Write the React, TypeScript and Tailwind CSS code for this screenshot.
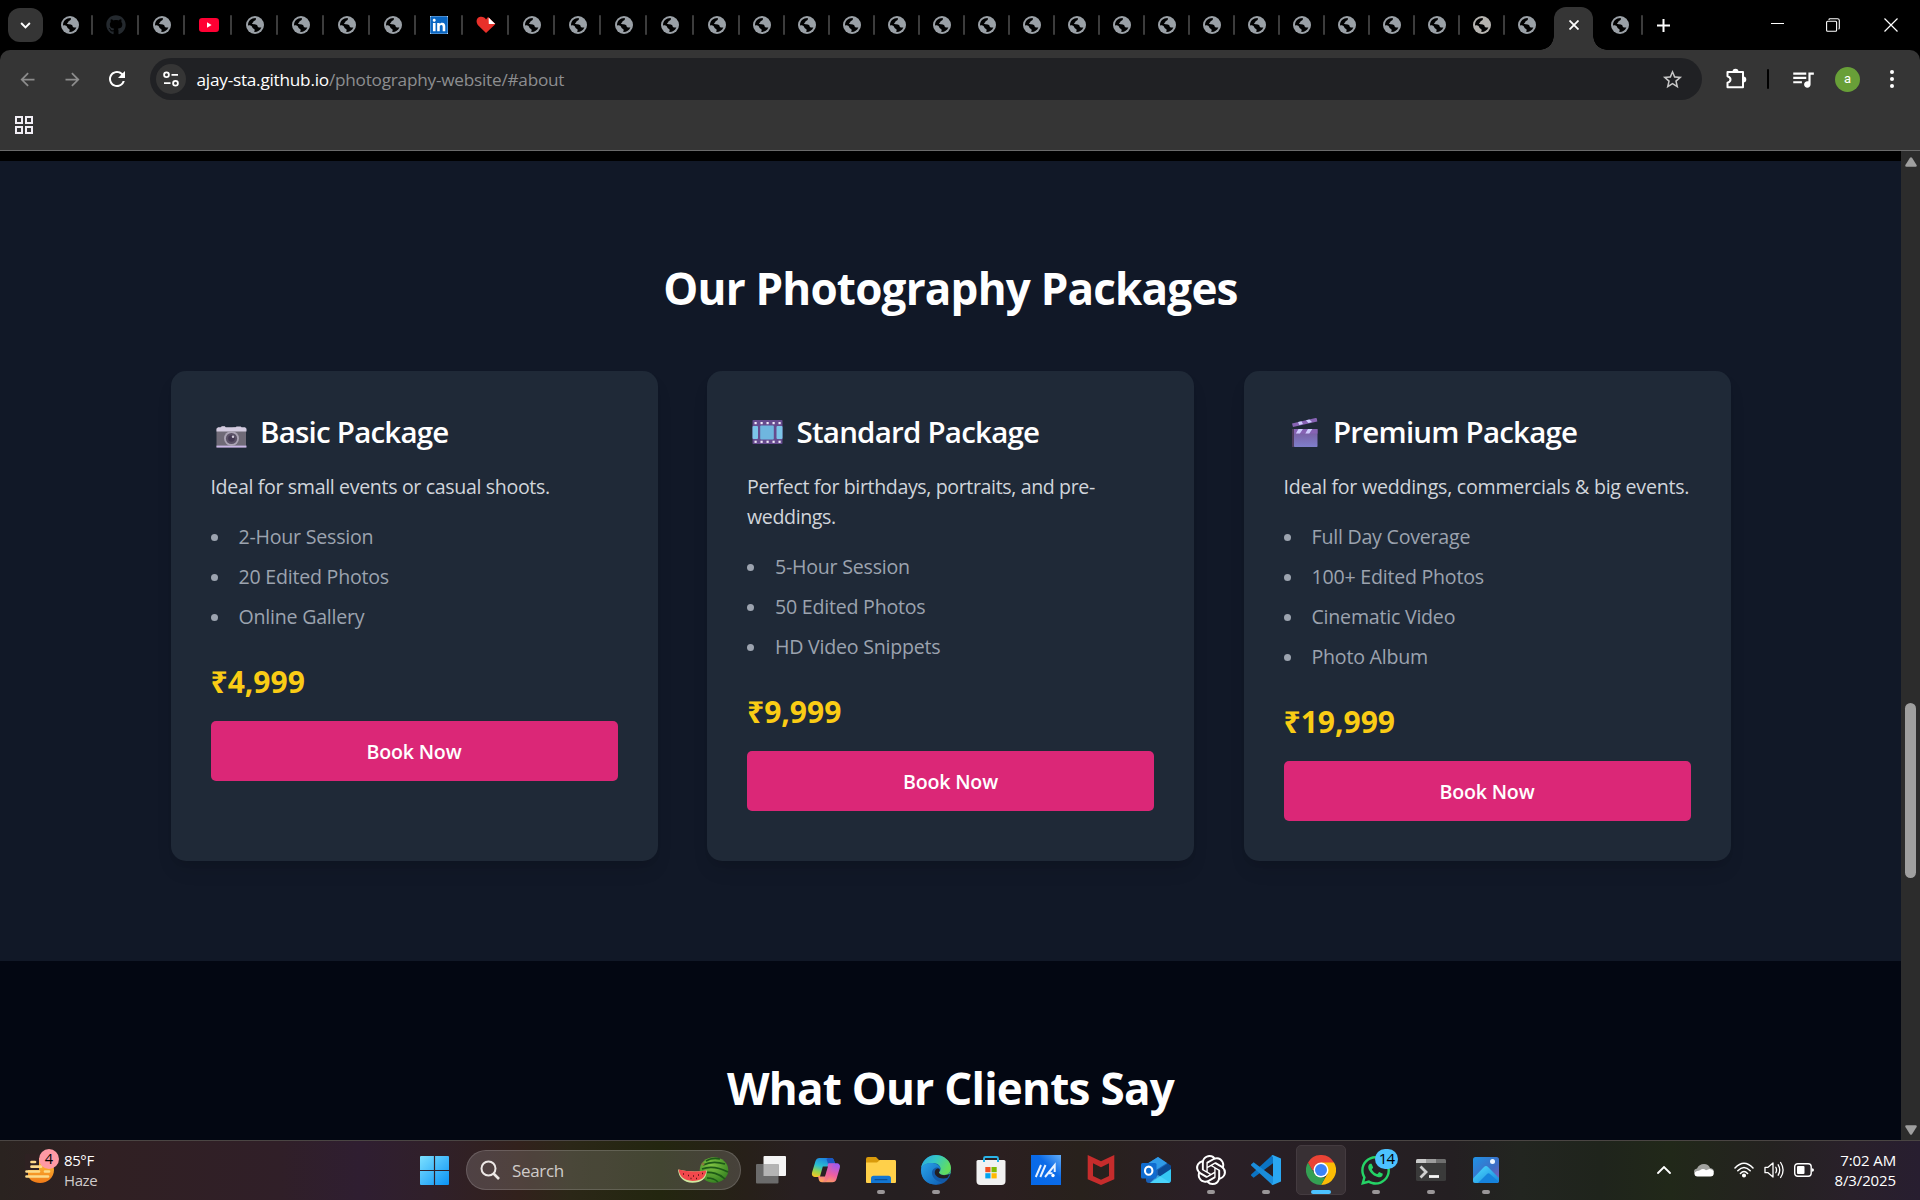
import type { ReactNode } from "react";
import { FaGithub, FaLinkedin, FaWhatsapp } from "react-icons/fa";
import { SiOpenai } from "react-icons/si";
import { MdQueueMusic, MdStarBorder, MdRefresh, MdArrowBack, MdArrowForward } from "react-icons/md";

/* ---------- Favicons ---------- */

function Globe({ light = false }: { light?: boolean }) {
  return (
    <svg viewBox="0 0 18 18" className="size-[18px] shrink-0">
      <circle cx="9" cy="9" r="9" fill={light ? "#b5b3af" : "#9aa0a6"} />
      <path
        fill="#000"
        d="M2 9.2C2 5.2 5 2.2 9.6 2.1 10.4 3.2 9.8 4.2 8.4 4.8 6.9 5.3 7.6 6.6 6.4 7.1 5.6 7.6 6.2 8.3 8 8.2 10.8 8.2 11.8 9.4 11.7 10.6 11.8 12 13.4 11.2 15.4 11.6 14 14.8 11.4 16.2 8.2 16 8.8 14.8 9 13.2 7.6 12.8 5.8 12.2 6.6 10.4 5.2 9.8 4.2 9.3 3 9.6 2 9.2Z"
      />
    </svg>
  );
}

function YouTube() {
  return (
    <svg viewBox="0 0 20 14" className="h-[14px] w-5 shrink-0">
      <rect width="20" height="14" rx="3.2" fill="#ff0033" />
      <path d="M8 4.2L12.6 7 8 9.8z" fill="#fff" />
    </svg>
  );
}

function LinkedIn() {
  return (
    <span className="flex size-[18px] shrink-0 items-center justify-center bg-white">
      <FaLinkedin className="size-[20px] shrink-0 text-[#0a66c2]" />
    </span>
  );
}

function Heart() {
  return (
    <svg viewBox="0 0 20 18" className="h-[18px] w-5 shrink-0">
      <path d="M10 17L1.800 9C-.6 5.600.6 1.400 4.400.8 6.800.4 9 1.600 10 3.400L12 1l7.400 7-1.400 1.400z" fill="#e8302a" />
      <path d="M12.600 1.400l6.600 6.500-6.400.2z" fill="#fff" />
    </svg>
  );
}

const icons: Record<number, ReactNode> = {
  1: <FaGithub className="size-5 shrink-0 text-[#24292e]" />,
  3: <YouTube />,
  8: <LinkedIn />,
  9: <Heart />,
  31: <Globe light />,
};
const wideTabs = Array.from({ length: 15 }, (_, i) => i);
const narrowTabs = Array.from({ length: 18 }, (_, i) => i + 15);

function Separator() {
  return <span className="h-5 w-[2px] shrink-0 rounded-full bg-[#3c3c3c]" />;
}

/* ---------- Browser chrome ---------- */

function TabStrip() {
  return (
    <div className="flex h-[50px] items-center bg-black">
      <button className="ml-2 flex h-[34px] w-[35px] shrink-0 items-center justify-center rounded-xl bg-[#353535]">
        <svg viewBox="0 0 12 8" className="h-[7px] w-[11px]" fill="none" stroke="#fff" strokeWidth="2.2">
          <path d="M1 1.200l5 5 5-5" />
        </svg>
      </button>
      <div className="ml-[3.900px] flex shrink-0 items-center">
        {wideTabs.map((i) => (
          <div key={i} className="flex w-[46.200px] items-center pl-[2px]">
            <span className="flex flex-1 justify-center">{icons[i] ?? <Globe />}</span>
            <Separator />
          </div>
        ))}
        {narrowTabs.map((i) => (
          <div key={i} className="flex w-[45px] items-center pl-[1px]">
            <span className="flex flex-1 justify-center">{icons[i] ?? <Globe />}</span>
            {i < 32 ? <Separator /> : <span className="w-[2px]" />}
          </div>
        ))}
      </div>
      <div className="relative ml-[4.500px] flex h-[43px] w-[39px] shrink-0 items-center justify-center self-end rounded-t-xl bg-[#353535]">
        <span className="absolute bottom-0 -left-[14px] size-[14px] bg-[radial-gradient(circle_at_0_0,transparent_13.500px,#353535_14px)]" />
        <span className="absolute -right-[14px] bottom-0 size-[14px] bg-[radial-gradient(circle_at_100%_0,transparent_13.500px,#353535_14px)]" />
        <svg viewBox="0 0 10 10" className="mb-[7px] size-[10px]" stroke="#fff" strokeWidth="1.800">
          <path d="M.5.5l9 9M9.500.5l-9 9" />
        </svg>
      </div>
      <div className="ml-[17.500px] flex shrink-0 items-center gap-[12px]">
        <Globe />
        <Separator />
      </div>
      <svg viewBox="0 0 13 13" className="ml-[14.500px] size-[13px] shrink-0" stroke="#fff" strokeWidth="2">
        <path d="M6.500 0v13M0 6.500h13" />
      </svg>
      <div className="ml-auto flex items-center pr-[22px]">
        <span className="mb-[3px] h-px w-[13px] bg-white" />
        <svg viewBox="0 0 14 14" className="mr-[44px] ml-[42px] size-[14px]" fill="none" stroke="#fff" strokeWidth="1.100">
          <rect x=".6" y="3.200" width="10" height="10" rx="1" />
          <path d="M3 1.900V1.600Q3 .7 4 .7H11.500Q13.300.7 13.300 2.500V10Q13.300 11 12.500 11" />
        </svg>
        <svg viewBox="0 0 14 14" className="size-[14px]" stroke="#fff" strokeWidth="1.200">
          <path d="M.5.5l13 13M13.500.5l-13 13" />
        </svg>
      </div>
    </div>
  );
}

function Extensions() {
  return (
    <svg viewBox="0 0 22 22" className="ml-[23px] size-[22px]">
      <path
        d="M2.500 4h15.500v15.300H2.500v-4.500q3-1 3-3.300T2.500 8.200z"
        fill="none"
        stroke="#fff"
        strokeWidth="2"
        strokeLinejoin="round"
      />
      <path d="M7.500 3.800a3 3 0 0 1 6 0zM18.300 8.600a3 3 0 0 1 0 6z" fill="#fff" />
    </svg>
  );
}

function Toolbar() {
  return (
    <div className="bg-black">
      <div className="h-[101px] rounded-t-[10px] border-b border-[#6a6a6a] bg-[#353535]">
        <div className="flex h-[58px] items-center">
          <MdArrowBack className="ml-[17px] size-[21px] text-[#8c8c8c]" />
          <MdArrowForward className="ml-[24px] size-[21px] text-[#8c8c8c]" />
          <MdRefresh className="ml-[22px] size-[24px] text-white" />
          <div className="ml-[21px] flex h-[42px] w-[1552px] items-center rounded-full bg-[#202124]">
            <span className="ml-1.5 flex size-[30px] items-center justify-center rounded-full bg-[#353535]">
              <svg viewBox="0 0 16 16" className="size-4" fill="none" stroke="#fff" strokeWidth="1.800">
                <circle cx="3.500" cy="3.800" r="2.400" />
                <path d="M8.500 3.800H15M1 12.200H7.500" />
                <circle cx="12.500" cy="12.200" r="2.400" />
              </svg>
            </span>
            <span className="ml-[10.500px] pt-[2px] text-[17.200px] leading-none tracking-[-0.230px] text-white">
              ajay-sta.github.io<span className="text-[#8d8e90]">/photography-website/#about</span>
            </span>
            <MdStarBorder className="mr-[18px] ml-auto size-[23px] text-[#c7c7c7]" />
          </div>
          <Extensions />
          <span className="ml-[20px] h-5 w-[2px] rounded-full bg-black" />
          <MdQueueMusic className="ml-[21px] size-[26px] text-white" />
          <span className="ml-[19px] flex size-[25px] items-center justify-center rounded-full bg-[#689f38] pb-px font-['Roboto'] text-[13px] leading-none text-white">
            a
          </span>
          <span className="ml-[30px] flex flex-col gap-[3px]">
            <span className="size-1 rounded-full bg-white" />
            <span className="size-1 rounded-full bg-white" />
            <span className="size-1 rounded-full bg-white" />
          </span>
        </div>
        <div className="ml-[15px] grid w-[18px] grid-cols-2 gap-[2px] pt-[8px]">
          {[0, 1, 2, 3].map((i) => (
            <span key={i} className="size-2 border-2 border-[#f1eef5]" />
          ))}
        </div>
      </div>
    </div>
  );
}

/* ---------- Package cards ---------- */

function CameraIcon() {
  return (
    <svg viewBox="0 0 48 40" className="h-10 w-12 shrink-0">
      <path d="M6 17h3l1-1.500h4l1 1.500h6l2-1h4l2 1.200h2v1h4v18.300H5.500V18z" fill="#6f6a77" />
      <path d="M5.500 17.800L7 16.200H10l.8-1h3l.8 1h10l1-.8h4l1 .8h3.500l1.400 1.600v2.700h-30z" fill="#d3cbe0" />
      <rect x="5.500" y="34.600" width="30" height="1.900" fill="#c9b6e6" />
      <circle cx="20.500" cy="27.500" r="7.500" fill="#aaa3b4" />
      <circle cx="20.500" cy="27.500" r="5.600" fill="#5b5267" />
      <circle cx="20.500" cy="27.500" r="3.300" fill="#453a54" />
      <circle cx="22" cy="25.800" r="1.200" fill="#cfc9d8" />
    </svg>
  );
}

function FilmIcon() {
  return (
    <svg viewBox="0 0 48 40" className="h-10 w-12 shrink-0">
      <rect x="5.500" y="9" width="30" height="24" rx=".8" fill="#664b8e" />
      <rect x="5.500" y="15" width="5.500" height="13" rx="1" fill="#7cc4e8" />
      <rect x="13.200" y="14.600" width="13.600" height="13.800" rx="1" fill="#6fb6df" />
      <rect x="29.500" y="15" width="6" height="13" rx="1" fill="#7cc4e8" />
      {[7.5, 13.5, 19.5, 25.5, 31.5].map((x) => (
        <g key={x} fill="#efe9f8">
          <rect x={x} y="11" width="2.200" height="2.200" />
          <rect x={x} y="29.700" width="2.200" height="2.200" />
        </g>
      ))}
    </svg>
  );
}

function ClapperIcon() {
  return (
    <svg viewBox="0 0 48 40" className="h-10 w-12 shrink-0">
      <defs>
        <linearGradient id="clapper" x1="0" y1="0" x2="0" y2="1">
          <stop offset="0" stopColor="#78599a" />
          <stop offset="1" stopColor="#7f7fcb" />
        </linearGradient>
      </defs>
      <path d="M8 18h2.500v18H8z" fill="#4d3c5c" />
      <rect x="10" y="18" width="23.500" height="18" rx=".8" fill="url(#clapper)" />
      <path d="M8 12.400L31.500 7q1.200-.2 1.400.8l.4 2.600L9 16z" fill="#8763b4" />
      <path d="M14 11l3.500-.8 1.400 2.800-3.600 1zM22 9.200l3.400-.8 2.600 2.700-3.600.9z" fill="#cfcdff" />
      <rect x="10" y="18" width="23.500" height="4.600" fill="#8763b4" />
      <path d="M14.500 18h4.400l-3 4.600h-4zM24 18h4.300l-3 4.600h-4z" fill="#cfcdff" />
    </svg>
  );
}

interface Package {
  icon: ReactNode;
  title: string;
  text: string;
  textClass: string;
  features: string[];
  price: string;
}

const packages: Package[] = [
  {
    icon: <CameraIcon />,
    title: "Basic Package",
    text: "Ideal for small events or casual shoots.",
    textClass: "tracking-[-0.350px]",
    features: ["2-Hour Session", "20 Edited Photos", "Online Gallery"],
    price: "₹4,999",
  },
  {
    icon: <FilmIcon />,
    title: "Standard Package",
    text: "Perfect for birthdays, portraits, and pre-weddings.",
    textClass: "tracking-[-0.380px]",
    features: ["5-Hour Session", "50 Edited Photos", "HD Video Snippets"],
    price: "₹9,999",
  },
  {
    icon: <ClapperIcon />,
    title: "Premium Package",
    text: "Ideal for weddings, commercials & big events.",
    textClass: "tracking-[-0.240px]",
    features: ["Full Day Coverage", "100+ Edited Photos", "Cinematic Video", "Photo Album"],
    price: "₹19,999",
  },
];

function PackageCard({ icon, title, text, textClass, features, price }: Package) {
  return (
    <div className="rounded-[15px] bg-[#1f2937] p-10 shadow-[0_12px_19px_-4px_rgba(0,0,0,0.1),0_5px_8px_-5px_rgba(0,0,0,0.1)]">
      <h3 className="mb-5 flex h-10 items-center text-[29.500px] leading-10 font-semibold tracking-[-0.780px] text-white">
        {icon}
        <span className="pt-[2px] pl-[1.500px]">{title}</span>
      </h3>
      <p className={`mb-[19px] pt-px text-[19.600px] leading-[30px] text-[#d1d5db] ${textClass}`}>{text}</p>
      <ul className="mb-[29px] space-y-[10px] pt-px text-[19.600px] leading-[30px] tracking-[-0.230px] text-[#9ca3af]">
        {features.map((f) => (
          <li key={f} className="flex items-center">
            <span className="mr-[21px] size-[7px] rounded-full bg-[#9ca3af]" />
            {f}
          </li>
        ))}
      </ul>
      <p className="mb-[19px] pt-[1px] text-[30px] leading-10 font-bold text-[#facc15]">{price}</p>
      <button className="h-[60px] w-full rounded-[5px] bg-[#db2777] pt-[2px] text-[19.600px] font-semibold tracking-[-0.200px] text-white">
        Book Now
      </button>
    </div>
  );
}

function Page() {
  return (
    <div className="h-[989px] flex-1 overflow-hidden">
      <div className="h-[10px] bg-black" />
      <section className="h-[800px] bg-[#111827] pt-[102px]">
        <h2 className="mb-[58px] text-center text-[44px] leading-[50px] font-bold tracking-[-0.800px] text-white">
          Our Photography Packages
        </h2>
        <div className="mx-auto grid h-[490px] w-[1560px] grid-cols-3 gap-[49.500px]">
          {packages.map((p) => (
            <PackageCard key={p.title} {...p} />
          ))}
        </div>
      </section>
      <section className="h-[179px] bg-[#030712] pt-[102px]">
        <h2 className="text-center text-[44px] leading-[50px] font-bold tracking-[-0.740px] text-white">
          What Our Clients Say
        </h2>
      </section>
    </div>
  );
}

function Scrollbar() {
  return (
    <div className="flex h-[989px] w-[19px] flex-col items-center bg-[#2c2c2c]">
      <svg viewBox="0 0 12 10" className="mt-[6px] h-[10px] w-3" fill="#9f9f9f">
        <path d="M5 .8q1-1.200 2 0l4.600 7.200q.6 1.500-1 1.700H1.400q-1.600-.2-1-1.700z" />
      </svg>
      <div className="mt-[536px] h-[175px] w-[11px] rounded-full bg-[#9f9f9f]" />
      <svg viewBox="0 0 12 10" className="mt-auto mb-[5px] h-[10px] w-3" fill="#9f9f9f">
        <path d="M5 9.200q1 1.200 2 0l4.600-7.200q.6-1.500-1-1.700H1.400q-1.600.2-1 1.700z" />
      </svg>
    </div>
  );
}

/* ---------- Taskbar ---------- */

function Weather() {
  return (
    <div className="relative ml-[25px] size-[32px]">
      <svg viewBox="0 0 32 32" className="size-8">
        <defs>
          <linearGradient id="sun" x1="0" y1="0" x2="0" y2="1">
            <stop offset="0" stopColor="#ffc83d" />
            <stop offset="1" stopColor="#f07a18" />
          </linearGradient>
        </defs>
        <path d="M3 15C3 8 8 4 15 4s14 5 14 12-6 13-14 13C8 29 4 25 3 22z" fill="url(#sun)" />
        <path d="M0 0h16v4H0zM0 4h14v12H0zM0 12h3v9H0z" fill="#2e2122" />
        <path d="M6.500 8H10M6.500 12.700H16M1.500 17.500H14M20 17.500h4M1.500 22.500H23" stroke="#fcdb8a" strokeWidth="2.700" strokeLinecap="round" />
      </svg>
      <span className="absolute -top-[5px] left-[14px] flex size-5 items-center justify-center rounded-full bg-[#ff99a4] text-[14.500px] leading-none text-black">
        4
      </span>
    </div>
  );
}

function Watermelon() {
  return (
    <svg viewBox="0 0 52 28" className="h-7 w-[52px]">
      <defs>
        <radialGradient id="melon" cx=".4" cy=".3" r=".8">
          <stop offset="0" stopColor="#7fc242" />
          <stop offset="1" stopColor="#2f7d1e" />
        </radialGradient>
      </defs>
      <ellipse cx="37" cy="14" rx="14.300" ry="12.800" fill="url(#melon)" />
      <path
        d="M26 9c6-3 15-3 22-1M25 13c8-3 18-1 26 3M26 17c8-2 17 1 22 6M29 5c5-3 10-3 14-2M30 22c4 0 8 1 11 4"
        stroke="#1d5a17"
        strokeWidth="1.700"
        fill="none"
      />
      <circle cx="26" cy="8" r="1.500" fill="#8b7a3a" />
      <path d="M1 13.500Q15 17 30 14.500 29 26.800 15.500 26.800 2 26 1 13.500z" fill="#cfe8a0" />
      <path d="M1.600 13.600Q15 17 29.400 14.500 28 25 15.500 25 3 24.500 1.600 13.600z" fill="#f2484c" />
      <path d="M6 18h1M11 19.500h1M16 20h1M21 19h1M25 17.500h1M13.500 22.500h1M19 22.500h1" stroke="#5a1218" strokeWidth="1.400" />
    </svg>
  );
}

function TaskView() {
  return (
    <svg viewBox="0 0 30 30" className="size-[30px]">
      <rect x="7.500" y="1" width="22.500" height="20" rx="1" fill="#f4f4f4" />
      <rect x="0" y="9" width="22.500" height="19.500" rx="1" fill="#6b6b6b" />
      <rect x="7.500" y="9" width="15" height="12" fill="#b4b4b4" />
    </svg>
  );
}

function Copilot() {
  return (
    <svg viewBox="0 0 30 30" className="size-[30px]">
      <defs>
        <linearGradient id="cpa" x1=".6" y1="0" x2=".2" y2="1">
          <stop offset="0" stopColor="#1c7fe0" />
          <stop offset=".45" stopColor="#2bbfd0" />
          <stop offset=".75" stopColor="#9bd44a" />
          <stop offset="1" stopColor="#f5c527" />
        </linearGradient>
        <linearGradient id="cpb" x1=".7" y1="0" x2=".3" y2="1">
          <stop offset="0" stopColor="#a05af0" />
          <stop offset=".55" stopColor="#ef5fa0" />
          <stop offset="1" stopColor="#ffa45c" />
        </linearGradient>
      </defs>
      <path d="M14 3h6c2 0 2.600 1 3.200 3l1 3.500h-3c-2 0-3 .8-3.600 2.500L14 22H5C1.500 22 .3 20 1.200 17L4.500 6C5.200 4 6.500 3 8.500 3z" fill="url(#cpa)" />
      <path d="M17 3h3c2 0 2.600 1 3.200 3l1 3.500h-7L15.500 4z" fill="#1a56c4" />
      <path d="M16 27.300h-5c-2 0-2.800-1-3.300-3L7 21h4c2 0 2.700-1 3.200-2.500L17.300 8.300H25c3.500 0 4.600 2 3.700 5L25.500 24c-.7 2.200-2 3.300-4 3.300z" fill="url(#cpb)" />
      <path d="M11.800 11.500H17l-3 10H9z" fill="#292023" />
      <path d="M17.800 8.300H25q-3 .4-4 3.200l-3.800 12q-1 3.500-4 3.800H11q2-.8 3-4z" fill="#e95f9d" opacity=".35" />
    </svg>
  );
}

function Explorer() {
  return (
    <svg viewBox="0 0 30 30" className="size-[30px]">
      <path d="M0 4q0-2 2-2h8l3 3h7v10H0z" fill="#d99a0b" />
      <path d="M0 7.500h11L14 5h15q1 0 1 1.500V27q0 1-1 1H1q-1 0-1-1z" fill="#ffd04a" />
      <path d="M5 28v-4.500Q5 20.800 7.700 20.800H22.300Q25 20.800 25 23.500V28z" fill="#1276d3" />
      <rect x="8.500" y="24" width="13" height="1.300" rx=".6" fill="#0a4f96" />
    </svg>
  );
}

function Edge() {
  return (
    <svg viewBox="0 0 30 30" className="size-[30px]">
      <defs>
        <linearGradient id="edA" x1="0" y1="0" x2="1" y2=".4">
          <stop offset="0" stopColor="#2aa6e6" />
          <stop offset=".5" stopColor="#35c7c4" />
          <stop offset="1" stopColor="#62dd5e" />
        </linearGradient>
        <linearGradient id="edB" x1="0" y1="0" x2="1" y2="1">
          <stop offset="0" stopColor="#2aa3e8" />
          <stop offset="1" stopColor="#0f62b8" />
        </linearGradient>
      </defs>
      <circle cx="15" cy="15" r="15" fill="#135aa8" />
      <path d="M0 14C.5 6 7 0 15 0s15 6 15 13c0 4-3 7-7 7-3 0-5-1-5-2.200 0-.8 1.600-1.500 1.600-4 0-3-3-5.800-7.600-5.800C6 8 1 10 0 14z" fill="url(#edA)" />
      <path d="M0 15C.4 10 5 8 10 8c5 0 9 2.500 9.500 6-2-2-5-2.200-7 0-4 4 0 12 8 13.500C12 32 0 28 0 15z" fill="url(#edB)" />
      <path d="M19 15c-1 1.500-1.400 2.500-.6 3.300C20 20.500 25 21 28.800 18.500c-.8 2-1.600 3.300-2.500 4.500-4 1-9.500.6-11.800-3-1.400-2.400-.7-5.500 2-6.500 1-.3 2 .5 2.500 1.500z" fill="#241f22" />
      <path d="M18 17.500c1.400 2.600 7 3.600 11.500.8.300-1.200.5-2.300.5-4-.4 3.800-3.500 5.700-7 5.700-2.500 0-4.600-1-5-2.500z" fill="#55d66a" />
    </svg>
  );
}

function Store() {
  return (
    <svg viewBox="0 0 30 30" className="size-[30px]">
      <path d="M8 7V3.500Q8 2 9.500 2h11Q22 2 22 3.500V7" fill="none" stroke="#2ab4e8" strokeWidth="1.900" />
      <path d="M.5 6.500Q.5 5 2 5h26q1.500 0 1.500 1.500V26q0 4-4 4h-21q-4 0-4-4z" fill="#f1f1f1" />
      <path d="M7 5h2v2H7zM21 5h2v2h-2z" fill="#2ab4e8" />
      <rect x="9.300" y="12" width="5.200" height="5.200" fill="#f25022" />
      <rect x="15.500" y="12" width="5.200" height="5.200" fill="#7fba00" />
      <rect x="9.300" y="18.200" width="5.200" height="5.200" fill="#00a4ef" />
      <rect x="15.500" y="18.200" width="5.200" height="5.200" fill="#ffb900" />
    </svg>
  );
}

function MyAsus() {
  return (
    <svg viewBox="0 0 30 30" className="size-[30px]">
      <defs>
        <linearGradient id="asus" x1="0" y1="1" x2="1" y2="0">
          <stop offset="0" stopColor="#0568e8" />
          <stop offset=".6" stopColor="#0b6be8" />
          <stop offset="1" stopColor="#63adf7" />
        </linearGradient>
      </defs>
      <rect width="30" height="30" fill="url(#asus)" />
      <path d="M4.800 22L10 10M9.300 22L14.500 10M14 22L23.700 10V17M17 18.300h4.500" fill="none" stroke="#e8f2ff" strokeWidth="2" />
      <circle cx="22" cy="20.500" r="1.700" fill="#fff" />
    </svg>
  );
}

function McAfee() {
  return (
    <svg viewBox="0 0 30 30" className="size-[30px]">
      <path d="M1.700 0L15 6.300 28.300 0V24.300L15 30 1.700 24.300zM7 8.300V21l8 3.700L23 21V8.300l-8 4z" fill="#c62c2c" fillRule="evenodd" />
    </svg>
  );
}

function Outlook() {
  return (
    <svg viewBox="0 0 30 30" className="size-[30px]">
      <path d="M5 9.500L17 2l13 9v14q0 3-3 3H8q-3 0-3-3z" fill="#1a5fb4" />
      <path d="M5 9.500L17 2l9 6-14 9z" fill="#2f9be8" />
      <path d="M17 15L27 8.500l3 2.500v5L17 22z" fill="#0b4a94" />
      <path d="M9 28L30 14v11q0 3-3 3z" fill="#35c8f4" />
      <path d="M9 28l8-8 12 7.500q-1 .5-2 .5z" fill="#5bdcff" opacity=".55" />
      <rect x="0" y="8" width="15.500" height="15.500" rx="1.500" fill="#0f6cd0" />
      <ellipse cx="7.700" cy="15.700" rx="3.700" ry="4.100" fill="none" stroke="#fff" strokeWidth="2.100" />
    </svg>
  );
}

function VSCode() {
  return (
    <svg viewBox="0 0 30 30" className="size-[30px]">
      <path d="M22 8.300L2.600 22.700.3 20.700Q-.3 20 .4 19.200L20.600.7 22 .2z" fill="#0b74c4" />
      <path d="M22 21.700L2.600 7.300.3 9.300Q-.3 10 .4 10.800L20.600 29.300l1.400.5z" fill="#1a8ddb" />
      <path d="M21.800 0L30 3.600V26.400L21.800 30 20.500 29.200 22 28V2L20.500.8z" fill="#2aa7f2" />
    </svg>
  );
}

function Chrome() {
  return (
    <svg viewBox="0 0 30 30" className="size-[30px]">
      <path d="M15 15L2 7.500A15 15 0 0 1 28 7.500z" fill="#ea4335" />
      <path d="M15 7.500H28A15 15 0 0 1 15 30L21.500 18.750z" fill="#fbbc05" />
      <path d="M2 7.500L8.500 18.750 15 22.500H19.300L15 30A15 15 0 0 1 2 7.500z" fill="#34a053" />
      <path d="M2 7.500H15V15H6.300z" fill="#ea4335" />
      <circle cx="15" cy="15" r="7.500" fill="#fff" />
      <circle cx="15" cy="15" r="6" fill="#3b82f6" />
    </svg>
  );
}

function WhatsApp() {
  return (
    <span className="relative">
      <FaWhatsapp className="size-[33px] text-[#25d366]" />
      <span className="absolute -top-[5px] left-[16px] flex h-5 w-[23px] items-center justify-center rounded-full bg-[#4cc2ff] text-[15px] leading-none tracking-[-0.800px] text-black">
        14
      </span>
    </span>
  );
}

function Terminal() {
  return (
    <svg viewBox="0 0 30 30" className="size-[30px]">
      <rect x="0" y="4" width="30" height="22" rx="1.500" fill="#3a3a3a" />
      <path d="M0 5.500Q0 4 1.500 4H10v4H0z" fill="#c9c9c9" />
      <path d="M10 4h10v4H10z" fill="#9c9c9c" />
      <path d="M20 4h8.500Q30 4 30 5.500V8H20z" fill="#6f6f6f" />
      <path d="M4.500 11.500L10 17l-5.500 5.500" fill="none" stroke="#cfcfcf" strokeWidth="2.800" />
      <path d="M13 21.500H23" stroke="#f5f5f5" strokeWidth="2.800" />
    </svg>
  );
}

function Photos() {
  return (
    <svg viewBox="0 0 30 30" className="size-[30px]">
      <defs>
        <linearGradient id="phA" x1="0" y1="0" x2="1" y2="1">
          <stop offset="0" stopColor="#1f93e6" />
          <stop offset=".6" stopColor="#3f6dc4" />
          <stop offset="1" stopColor="#8a5bb8" />
        </linearGradient>
        <linearGradient id="phB" x1="0" y1="0" x2="1" y2="1">
          <stop offset="0" stopColor="#4fdcff" />
          <stop offset="1" stopColor="#1787dd" />
        </linearGradient>
      </defs>
      <rect x="2" y="2" width="26" height="26" rx="2.500" fill="url(#phA)" />
      <path d="M2 23.500L13 12q2-2 4 0l11 11v2.500q0 2.500-2.500 2.500h-21Q2 28 2 25.500z" fill="url(#phB)" />
      <path d="M7 28l9-9q1.500-1.300 3 0l8.500 7.500q-.6 1.500-2 1.500z" fill="#1683dc" />
      <circle cx="21.500" cy="6.500" r="2.500" fill="#eef6ff" />
    </svg>
  );
}

interface TaskbarItem {
  name: string;
  icon: ReactNode;
  state?: "open" | "active";
}

const apps: TaskbarItem[] = [
  { name: "taskview", icon: <TaskView /> },
  { name: "copilot", icon: <Copilot /> },
  { name: "explorer", icon: <Explorer />, state: "open" },
  { name: "edge", icon: <Edge />, state: "open" },
  { name: "store", icon: <Store /> },
  { name: "myasus", icon: <MyAsus /> },
  { name: "mcafee", icon: <McAfee /> },
  { name: "outlook", icon: <Outlook /> },
  { name: "chatgpt", icon: <SiOpenai className="size-[30px] text-white" />, state: "open" },
  { name: "vscode", icon: <VSCode />, state: "open" },
  { name: "chrome", icon: <Chrome />, state: "active" },
  { name: "whatsapp", icon: <WhatsApp />, state: "open" },
  { name: "terminal", icon: <Terminal />, state: "open" },
  { name: "photos", icon: <Photos />, state: "open" },
];

function TaskbarApp({ icon, state }: TaskbarItem) {
  return (
    <div className="flex w-[55px] justify-center">
      <div
        className={
          state === "active"
            ? "relative flex size-[50px] items-center justify-center rounded-[5px] border border-[#443b40] bg-[#383034]"
            : "relative flex size-[50px] items-center justify-center"
        }
      >
        {icon}
        {state === "open" && <span className="absolute bottom-[1px] h-1 w-2 rounded-full bg-[#9a9698]" />}
        {state === "active" && <span className="absolute bottom-0 h-1 w-5 rounded-full bg-[#4cc2ff]" />}
      </div>
    </div>
  );
}

function Taskbar() {
  return (
    <div className="flex h-[60px] items-center border-t border-[#4a4543] bg-[linear-gradient(90deg,#2a2320_0px,#302023_110px,#301f28_280px,#2f1e31_360px,#30202a_430px,#32211c_520px,#2b2717_570px,#23260f_660px,#272019_745px,#281f21_800px,#251f21_900px,#2b1f20_1000px,#28211c_1080px,#2a1f26_1200px,#241f22_1450px,#222520_1520px,#1f241c_1600px,#212819_1670px,#242220_1770px,#29202a_1850px,#281e30_1920px)] pb-px">
      <div className="flex w-[420px] items-center">
        <Weather />
        <div className="ml-[7px] flex flex-col text-[15px] leading-5 tracking-[-0.400px]">
          <span className="text-white">85°F</span>
          <span className="text-[#cfcaca]">Haze</span>
        </div>
      </div>
      <svg viewBox="0 0 29 29" className="size-[29px]">
        <defs>
          <linearGradient id="win" x1="0" y1="0" x2="1" y2="1">
            <stop offset="0" stopColor="#7ce0ff" />
            <stop offset="1" stopColor="#0a93f5" />
          </linearGradient>
        </defs>
        <path d="M0 1q0-1 1-1h12.900v13.900H0zM15.100 0H28q1 0 1 1v12.900H15.100zM0 15.100h13.900V29H1q-1 0-1-1zM15.100 15.100H29V28q0 1-1 1H15.100z" fill="url(#win)" />
      </svg>
      <div className="ml-[17px] flex h-10 w-[275px] items-center rounded-full border border-white/15 bg-white/15">
        <svg viewBox="0 0 20 20" className="ml-[13px] size-5" fill="none" stroke="#ece8e6" strokeWidth="2">
          <circle cx="8.500" cy="8.500" r="7" />
          <path d="M13.500 13.500L19 19" strokeWidth="2.600" />
        </svg>
        <span className="ml-[12px] pt-[2px] text-[17px] tracking-[-0.330px] text-[#d0ccca]">Search</span>
        <span className="mr-[11px] ml-auto">
          <Watermelon />
        </span>
      </div>
      <div className="ml-[2px] flex">
        {apps.map((a) => (
          <TaskbarApp key={a.name} {...a} />
        ))}
      </div>
      <div className="ml-auto flex items-center pr-[24px]">
        <svg viewBox="0 0 14 8" className="h-2 w-[14px]" fill="none" stroke="#fff" strokeWidth="1.800" strokeLinecap="round">
          <path d="M1 7l6-6 6 6" />
        </svg>
        <svg viewBox="0 0 20 14" className="ml-[23px] h-[14px] w-5">
          <path d="M4 12Q0 12 0 8.500 0 6 3 5.500 5 1 10 1q4.500 0 6 4 4 .5 4 4z" fill="#a2a3a0" />
          <path d="M3.500 13.500Q.4 13.500.5 10.500q.2-2 2.500-2.500 1.500-.2 3-.8 3-2.400 6 0l3.500-1.200q4.300.5 4.300 4 0 3.500-3.500 3.500z" fill="#fff" />
        </svg>
        <svg viewBox="0 0 20 16" className="ml-5 h-4 w-5" fill="none" stroke="#fff" strokeWidth="1.500" strokeLinecap="round">
          <path d="M1 6Q10-3.500 19 6M3.800 8.800Q10 2.200 16.200 8.800M6.400 11.400Q10 7.700 13.600 11.400" />
          <circle cx="10" cy="13.500" r="1.300" fill="#fff" />
        </svg>
        <svg viewBox="0 0 20 18" className="ml-[10px] h-[18px] w-5" fill="none" stroke="#fff" strokeWidth="1.300" strokeLinecap="round" strokeLinejoin="round">
          <path d="M1 6.300H4L9 2V16L4 11.700H1z" />
          <path d="M11.800 6.200Q13.300 9 11.800 11.800M14.200 3.800Q17.300 9 14.200 14.200M16.600 1.500Q21.600 9 16.600 16.500" />
        </svg>
        <svg viewBox="0 0 20 14" className="ml-[10px] h-[14px] w-5" fill="none">
          <rect x=".7" y=".7" width="16.500" height="12.600" rx="3" stroke="#fff" strokeWidth="1.400" />
          <rect x="3" y="3" width="7.500" height="8" rx="1" fill="#fff" />
          <path d="M18 5.200q2 0 2 1.800t-2 1.800z" fill="#fff" />
        </svg>
        <div className="flex w-[82px] flex-col items-end text-[15px] leading-5 tracking-[-0.120px] text-white">
          <span>7:02 AM</span>
          <span>8/3/2025</span>
        </div>
      </div>
    </div>
  );
}

export default function App() {
  return (
    <div className="flex h-[1200px] w-[1920px] flex-col overflow-hidden bg-black font-['Open_Sans','Noto_Sans',sans-serif]">
      <TabStrip />
      <Toolbar />
      <div className="flex">
        <Page />
        <Scrollbar />
      </div>
      <Taskbar />
    </div>
  );
}
